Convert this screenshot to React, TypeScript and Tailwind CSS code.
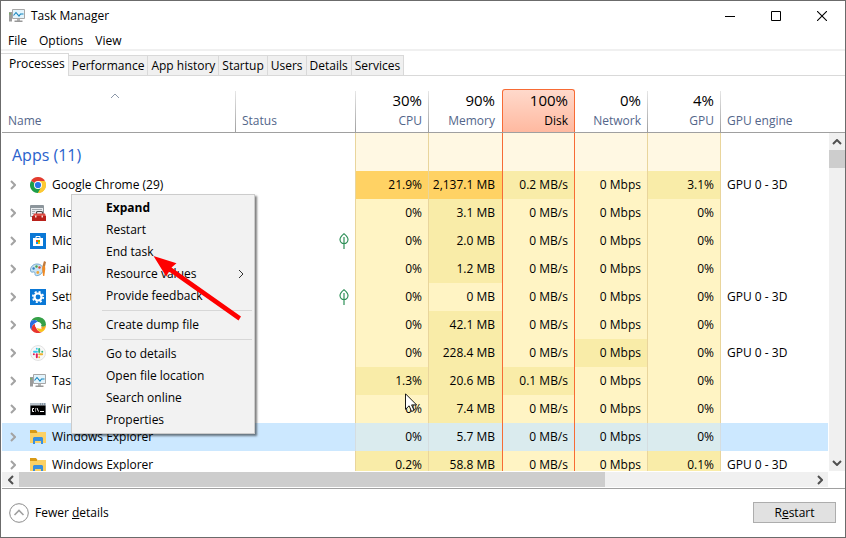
import type { ReactNode } from "react";
import clsx from "clsx";

type Level = "low" | "mid" | "high";
type Cell = [string, Level?];

interface Process {
  name: string;
  icon: ReactNode;
  leaf?: boolean;
  selected?: boolean;
  cells: Cell[];
  engine?: string;
}

const levelColor: Record<Level, string> = {
  low: "bg-[#fff4c4]",
  mid: "bg-[#f9eca8]",
  high: "bg-[#ffd264]",
};

function ChromeIcon() {
  return (
    <svg viewBox="0 0 16 16" className="size-4">
      <path d="M8 8 1.07 4A8 8 0 0 1 14.93 4Z" fill="#e33b2e" />
      <path d="M8 8 1.07 4A8 8 0 0 0 8 16Z" fill="#1e9e4a" />
      <path d="M8 8V16A8 8 0 0 0 14.93 4H8Z" fill="#fcc934" />
      <path d="m4.5 10 3.5 6 3.5-6z" fill="#1e9e4a" />
      <path d="M11.5 10 8 16a8 8 0 0 0 6.93-12H8z" fill="#fcc934" />
      <circle cx="8" cy="8" r="4" fill="#fff" />
      <circle cx="8" cy="8" r="3.1" fill="#2b74e8" />
    </svg>
  );
}

function ToolboxIcon() {
  return (
    <svg viewBox="0 0 16 16" className="size-4">
      <path d="M.5.5h13v11H.5z" fill="#e9edf0" stroke="#8d969c" />
      <path d="M1 1h12v2H1z" fill="#8d969c" />
      <path d="M2 4.500h10M2 6.500h3M2 8.500h2" stroke="#a3abb0" />
      <path d="M6.500 9V7.500q0-1 1-1h4q1 0 1 1V9" fill="none" stroke="#4b4b4b" strokeWidth="1.200" />
      <path d="M4 8.500h11l1 3H2.500z" fill="#dc4b42" />
      <path d="M2 11h14v5H2z" fill="#b9211b" />
      <path d="M5 10.500h1.500v2H5zM11.500 10.500H13v2h-1.500z" fill="#f3dcd8" />
    </svg>
  );
}

function StoreIcon() {
  return (
    <svg viewBox="0 0 16 16" className="size-4">
      <path d="M0 0h16v16H0z" fill="#0a78d6" />
      <path d="M6 5V3.500h4V5" fill="none" stroke="#fff" />
      <path d="M3 5h10v8H3z" fill="#fff" />
      <path d="M6 7h2v2H6z" fill="#f25022" />
      <path d="M8 7h2v2H8z" fill="#7fba00" />
      <path d="M6 9h2v2H6z" fill="#00a4ef" />
      <path d="M8 9h2v2H8z" fill="#ffb900" />
    </svg>
  );
}

function PaintIcon() {
  return (
    <svg viewBox="0 0 16 16" className="size-4">
      <path
        d="M7 3C3 3 .5 6 .5 9c0 2 1 2.500 2.500 2 1.500-.4 2.200.3 2 1.800C4.800 14.500 6 15 8 14.500c3-.8 5-3 5-6C13 5 10.500 3 7 3Z"
        fill="#c9e2f3"
        stroke="#5a9bc7"
        strokeWidth=".8"
      />
      <circle cx="3.600" cy="7.500" r="1.200" fill="#2f7fc2" />
      <circle cx="6.500" cy="5.500" r="1.200" fill="#4fa447" />
      <circle cx="9.500" cy="6.500" r="1.200" fill="#d94a35" />
      <circle cx="7.800" cy="11.500" r="1.400" fill="#f0a63a" />
      <path d="m14 0 2 1-1 4.500-2.500-.5z" fill="#c07a3c" />
      <path d="M12.500 5h2.500l.3 3-1 7h-1.200l-1-7z" fill="#f08a24" />
    </svg>
  );
}

function SettingsIcon() {
  return (
    <svg viewBox="0 0 16 16" className="size-4">
      <path d="M0 0h16v16H0z" fill="#0a78d6" />
      <circle cx="8" cy="8" r="5.200" fill="none" stroke="#fff" strokeWidth="1.800" strokeDasharray="2.042 2.042" />
      <circle cx="8" cy="8" r="3.500" fill="none" stroke="#fff" strokeWidth="2.200" />
    </svg>
  );
}

function ShareIcon() {
  return (
    <svg viewBox="0 0 16 16" className="size-4">
      <path d="M8 0A8 8 0 0 0 1 4c3-2 6-1 7 1l5 3c1-4-1-8-5-8Z" fill="#35a047" />
      <path d="M1 4a8 8 0 0 0 1 9.500C1 9 4 6 8 5 6 2.500 3.500 2.500 1 4Z" fill="#2a6de0" />
      <path d="M2 13.500A8 8 0 0 0 12 15c-4 0-6-3-7-8-3 1-4 4-3 6.500Z" fill="#e8352e" />
      <path d="M12 15a8 8 0 0 0 4-7c-1 3-5 5-9 3 0 2 2 4 5 4Z" fill="#f9c21b" />
      <path d="M16 8a8 8 0 0 0-6-7.700c2 2 3 5 1 8.700 2 1.500 4 1 5-1Z" fill="#35a047" />
      <path d="M16 8c-.3 2-2 4-4 4.500l-1-3c2 .8 4 .3 5-1.500Z" fill="#f5a21d" />
      <circle cx="8" cy="8" r="3" fill="#fff" />
    </svg>
  );
}

function SlackIcon() {
  return (
    <svg viewBox="0 0 16 16" className="size-4">
      <circle cx="8" cy="8" r="7.500" fill="#f8f8f8" stroke="#dcdcdc" strokeWidth=".8" />
      <g fill="none" strokeWidth="1.900" strokeLinecap="round">
        <path d="M4 6.800h3" stroke="#36c5f0" />
        <path d="M6.800 3.700v.1" stroke="#36c5f0" />
        <path d="M9.200 4v3" stroke="#2eb67d" />
        <path d="M12.200 6.800h.1" stroke="#2eb67d" />
        <path d="M9.200 9.200h3" stroke="#ecb22e" />
        <path d="M9.200 12.200v.1" stroke="#ecb22e" />
        <path d="M6.800 9.200v3" stroke="#e01e5a" />
        <path d="M3.800 9.200h.1" stroke="#e01e5a" />
      </g>
    </svg>
  );
}

function TaskManagerIcon() {
  return (
    <svg viewBox="0 0 16 16" className="size-4 shrink-0">
      <path d="M0 4h3v9.500H0z" fill="#9b9b9b" />
      <path d="M.5 5h1v1.500h-1z" fill="#59c135" />
      <path d="M3.500 1.500h12v9h-12z" fill="#e3f4fc" stroke="#a7a7a7" />
      <path d="m4.500 7.500 2.500-3 3 3.500 1.500-2h3" fill="none" stroke="#1383bd" strokeWidth="1.100" />
      <path d="M8 11h3v2H8z" fill="#b5b5b5" />
      <path d="M5.500 12.500h8V14h-8z" fill="#989898" />
    </svg>
  );
}

function ConsoleIcon() {
  return (
    <svg viewBox="0 0 16 16" className="size-4">
      <path d="M0 2h16v12.500H0z" fill="#b9c3cc" />
      <path d="M.5 4.500h15V14H.5z" fill="#000" />
      <path d="M10 3h1m1 0h1m1 0h1" stroke="#51697f" />
      <path d="M4 7.500H2.500v3H4M5.500 7.500v1M5.500 9.500v1M7 7l1.500 3.500M10 10.500h4" fill="none" stroke="#fff" />
    </svg>
  );
}

function FolderIcon() {
  return (
    <svg viewBox="0 0 16 16" className="size-4">
      <path d="M0 1h6l1.500 2v3H0z" fill="#d99a16" />
      <path d="M0 4h7l1-1h8v11H0z" fill="#fcd164" />
      <path d="M3 15V9l1-1h8l1 1v6h-2v-3H5v3Z" fill="#3a8fdd" />
    </svg>
  );
}

function Leaf() {
  return (
    <svg viewBox="0 0 10 16" className="ml-auto h-4 w-[10px]" fill="none" stroke="#2d8f57">
      <path d="M5 .8C3 2.500 1 4 1 6.500 1 9 3 10.500 5 10.500S9 9 9 6.500C9 4 7 2.500 5 .8Z" strokeWidth="1.200" />
      <path d="M5 4v12" strokeWidth="1.200" />
    </svg>
  );
}

function Chevron({ className }: { className?: string }) {
  return (
    <svg viewBox="0 0 6 10" className={clsx("h-[10px] w-[6px]", className)} fill="none" stroke="currentColor">
      <path d="m1 1 4 4-4 4" />
    </svg>
  );
}

const processes: Process[] = [
  {
    name: "Google Chrome (29)",
    icon: <ChromeIcon />,
    cells: [["21.9%", "high"], ["2,137.1 MB", "high"], ["0.2 MB/s", "mid"], ["0 Mbps"], ["3.1%", "mid"]],
    engine: "GPU 0 - 3D",
  },
  {
    name: "Microsoft Management",
    icon: <ToolboxIcon />,
    cells: [["0%"], ["3.1 MB", "mid"], ["0 MB/s"], ["0 Mbps"], ["0%"]],
  },
  {
    name: "Microsoft Store",
    icon: <StoreIcon />,
    leaf: true,
    cells: [["0%"], ["2.0 MB", "mid"], ["0 MB/s"], ["0 Mbps"], ["0%"]],
  },
  {
    name: "Paint",
    icon: <PaintIcon />,
    cells: [["0%"], ["1.2 MB", "mid"], ["0 MB/s"], ["0 Mbps"], ["0%"]],
  },
  {
    name: "Settings",
    icon: <SettingsIcon />,
    leaf: true,
    cells: [["0%"], ["0 MB"], ["0 MB/s"], ["0 Mbps"], ["0%"]],
    engine: "GPU 0 - 3D",
  },
  {
    name: "ShareX",
    icon: <ShareIcon />,
    cells: [["0%"], ["42.1 MB", "mid"], ["0 MB/s"], ["0 Mbps"], ["0%"]],
  },
  {
    name: "Slack",
    icon: <SlackIcon />,
    cells: [["0%"], ["228.4 MB", "mid"], ["0 MB/s"], ["0 Mbps", "mid"], ["0%"]],
    engine: "GPU 0 - 3D",
  },
  {
    name: "Task Manager",
    icon: <TaskManagerIcon />,
    cells: [["1.3%", "mid"], ["20.6 MB", "mid"], ["0.1 MB/s", "mid"], ["0 Mbps"], ["0%"]],
  },
  {
    name: "Windows Command",
    icon: <ConsoleIcon />,
    cells: [["0%"], ["7.4 MB", "mid"], ["0 MB/s"], ["0 Mbps"], ["0%"]],
  },
  {
    name: "Windows Explorer",
    icon: <FolderIcon />,
    selected: true,
    cells: [["0%"], ["5.7 MB"], ["0 MB/s"], ["0 Mbps"], ["0%"]],
  },
  {
    name: "Windows Explorer",
    icon: <FolderIcon />,
    cells: [["0.2%", "mid"], ["58.8 MB", "mid"], ["0 MB/s"], ["0 Mbps"], ["0.1%", "mid"]],
    engine: "GPU 0 - 3D",
  },
];

const columns = [
  { label: "CPU", total: "30%" },
  { label: "Memory", total: "90%" },
  { label: "Disk", total: "100%" },
  { label: "Network", total: "0%" },
  { label: "GPU", total: "4%" },
];

const tabs = ["Processes", "Performance", "App history", "Startup", "Users", "Details", "Services"];

const menuGroups = [
  ["Expand", "Restart", "End task", "Resource values", "Provide feedback"],
  ["Create dump file"],
  ["Go to details", "Open file location", "Search online", "Properties"],
];

// Side borders of the five usage columns; Disk is the hot one.
function sideBorder(i: number, selected?: boolean) {
  if (i === 1) return "pr-[7px]";
  if (i === 2) return "border-x border-[#f76b35] pr-1.5";
  return clsx("border-r pr-1.5", selected ? "border-[#d5dde0]" : "border-[#e9d59c]");
}

const fadeLine =
  "bg-[linear-gradient(#e6e6e6,#a0a0a0)] bg-[length:1px_41px] bg-right-bottom bg-no-repeat";

function TitleBar() {
  return (
    <header className="flex h-[30px] shrink-0 items-center pl-2">
      <TaskManagerIcon />
      <h1 className="ml-1.5 flex-1">Task Manager</h1>
      <button aria-label="Minimize" className="flex h-full w-[46px] items-center justify-center">
        <svg viewBox="0 0 10 10" className="size-[10px]" stroke="#000">
          <path d="M0 5.500h10" />
        </svg>
      </button>
      <button aria-label="Maximize" className="flex h-full w-[46px] items-center justify-center">
        <svg viewBox="0 0 10 10" className="size-[10px]" fill="none" stroke="#000">
          <path d="M.5.5h9v9h-9z" />
        </svg>
      </button>
      <button aria-label="Close" className="flex h-full w-[46px] items-center justify-center">
        <svg viewBox="0 0 10 10" className="size-[10px]" stroke="#000" strokeWidth="1.100">
          <path d="m0 0 10 10M10 0 0 10" />
        </svg>
      </button>
    </header>
  );
}

function Tabs() {
  return (
    <div
      role="tablist"
      className="flex h-[23px] shrink-0 items-end bg-[linear-gradient(#d9d9d9,#d9d9d9)] bg-[length:100%_1px] bg-bottom bg-no-repeat"
    >
      {tabs.map((tab, i) => (
        <button
          key={tab}
          role="tab"
          aria-selected={i === 0}
          className={clsx(
            "border-[#d9d9d9]",
            i === 0
              ? "h-[23px] border-r border-t bg-white pr-[3px] pl-2 pb-0.5"
              : "h-[21px] border-y border-r bg-[#f0f0f0] px-[3px]"
          )}
        >
          {tab}
        </button>
      ))}
    </div>
  );
}

function ProcessTable() {
  return (
    <table className="w-full table-fixed border-separate border-spacing-0">
      <colgroup>
        <col className="w-[234px]" />
        <col className="w-[120px]" />
        {columns.map((c) => (
          <col key={c.label} className="w-[73px]" />
        ))}
        <col />
      </colgroup>
      <thead>
        <tr className="h-[57px] text-[#53668a]">
          <th className={clsx("border-b border-[#a0a0a0] p-0 pb-[3px] pl-1.5 text-left align-bottom font-normal", fadeLine)}>
            <Chevron className="mb-3 ml-[104px] -rotate-90 text-[#8b97a8]" />
            Name
          </th>
          <th className={clsx("border-b border-[#a0a0a0] p-0 pb-[3px] pl-1.5 text-left align-bottom font-normal", fadeLine)}>
            Status
          </th>
          {columns.map((c, i) => (
            <th key={c.label} className="border-b border-[#a0a0a0] p-0 pt-[13px] text-right align-bottom font-normal">
              <div
                className={clsx(
                  "flex h-[43px] flex-col justify-end pb-[3px]",
                  i === 2
                    ? "rounded-t-[3px] border-x border-t border-[#f76b35] bg-linear-to-b from-[#ffd9cb] to-[#ffb9a0] pr-1.5"
                    : "pr-[7px]",
                  i !== 1 && i !== 2 && fadeLine
                )}
              >
                <span className="mb-[3px] text-[15px] leading-5 text-black">{c.total}</span>
                <span className={i === 2 ? "text-black" : undefined}>{c.label}</span>
              </div>
            </th>
          ))}
          <th className="border-b border-[#a0a0a0] p-0 pb-[3px] pl-1.5 text-left align-bottom font-normal">GPU engine</th>
        </tr>
      </thead>
      <tbody>
        <tr className="h-[38px]">
          <td className="p-0 pt-1.5 pl-2.5 text-[16px] text-[#2a62cc]">Apps (11)</td>
          <td className="border-r border-[#e9d59c]" />
          {columns.map((c, i) => (
            <td key={c.label} className={clsx("bg-[#fff8e3]", sideBorder(i))} />
          ))}
          <td />
        </tr>
        {processes.map((p, row) => (
          <tr key={row} className={clsx("h-7", p.selected && "bg-[#cce8ff]")}>
            <td className="p-0">
              <div className="flex items-center pl-2 whitespace-nowrap">
                <Chevron className="mr-3.5 stroke-2 text-[#a3a3a3]" />
                {p.icon}
                <span className="ml-1.5">{p.name}</span>
              </div>
            </td>
            <td className={clsx("border-r p-0 pr-1.5", p.selected ? "border-[#d5dde0]" : "border-[#e9d59c]")}>
              {p.leaf && <Leaf />}
            </td>
            {p.cells.map(([value, level = "low"], i) => (
              <td
                key={i}
                className={clsx(
                  "py-0 pl-0 text-right whitespace-nowrap",
                  sideBorder(i, p.selected),
                  p.selected ? "bg-[#daebee]" : levelColor[level]
                )}
              >
                {value}
              </td>
            ))}
            <td className="py-0 pr-0 pl-1.5 whitespace-nowrap">{p.engine}</td>
          </tr>
        ))}
      </tbody>
    </table>
  );
}

function VerticalScrollbar() {
  return (
    <div className="flex w-[17px] shrink-0 flex-col">
      <div className="h-[57px] shrink-0 border-b border-[#a0a0a0]" />
      <div className="ml-px flex flex-1 flex-col bg-[#f0f0f0]">
        <button aria-label="Scroll up" className="flex h-[17px] items-center justify-center text-[#505050]">
          <Chevron className="-rotate-90 stroke-2" />
        </button>
        <div className="h-[18px] bg-[#cdcdcd]" />
        <button aria-label="Scroll down" className="mt-auto flex h-[17px] items-center justify-center text-[#505050]">
          <Chevron className="rotate-90 stroke-2" />
        </button>
      </div>
    </div>
  );
}

function HorizontalScrollbar() {
  return (
    <div className="mt-px mr-[17px] mb-px flex h-[15px] shrink-0 bg-[#f0f0f0]">
      <button aria-label="Scroll left" className="flex w-[17px] items-center justify-center text-[#505050]">
        <Chevron className="rotate-180 stroke-2" />
      </button>
      <div className="flex-1">
        <div className="h-full w-[74%] bg-[#cdcdcd]" />
      </div>
      <button aria-label="Scroll right" className="flex w-[17px] items-center justify-center text-[#505050]">
        <Chevron className="stroke-2" />
      </button>
    </div>
  );
}

function ContextMenu() {
  return (
    <div
      role="menu"
      className="absolute top-[193px] left-[70px] w-[184px] border border-[#cccccc] bg-[#f2f2f2] p-0.5 shadow-[2px_2px_2px_rgba(0,0,0,0.5)]"
    >
      {menuGroups.map((group, g) => (
        <div key={g}>
          {g > 0 && <hr className="my-[3px] ml-7 border-[#d7d7d7]" />}
          {group.map((item) => (
            <button
              key={item}
              role="menuitem"
              className={clsx(
                "flex h-[22px] w-full items-center justify-between pr-2 pl-8 whitespace-nowrap",
                item === "Expand" && "font-bold"
              )}
            >
              {item}
              {item === "Resource values" && <Chevron className="text-[#333]" />}
            </button>
          ))}
        </div>
      ))}
    </div>
  );
}

function Footer() {
  return (
    <footer className="flex h-[49px] shrink-0 items-center border-t border-[#a0a0a0] pr-[9px] pb-px pl-[7px]">
      <button className="flex items-center">
        <svg viewBox="0 0 20 20" className="size-5" fill="none" stroke="#8b8b8b">
          <circle cx="10" cy="10" r="9.300" />
          <path d="m5.500 12 4.500-4.500 4.500 4.500" stroke="#a0a0a0" strokeWidth="1.600" />
        </svg>
        <span className="ml-1.5">
          Fewer <u>d</u>etails
        </span>
      </button>
      <button className="ml-auto h-[21px] w-[83px] border border-[#adadad] bg-[#e1e1e1]">
        R<u>e</u>start
      </button>
    </footer>
  );
}

export default function App() {
  return (
    <div className="relative flex h-screen flex-col overflow-hidden border border-[#6b6b6b] bg-white font-['Open_Sans','Noto_Sans',sans-serif] text-[12px] leading-4 text-black">
      <TitleBar />
      <nav className="flex h-[18px] shrink-0 items-center gap-3 pt-0.5 pl-[7px]">
        <button>File</button>
        <button>Options</button>
        <button>View</button>
      </nav>
      <div className="mb-0.5 h-0.5 shrink-0 bg-[#f0f0f0]" />
      <Tabs />
      <main className="ml-px flex min-h-0 flex-1 flex-col">
        <div className="flex min-h-0 flex-1 overflow-hidden">
          <div className="min-w-0 flex-1 overflow-hidden">
            <ProcessTable />
          </div>
          <VerticalScrollbar />
        </div>
        <HorizontalScrollbar />
        <Footer />
      </main>
      <ContextMenu />
      <svg viewBox="0 0 90 66" className="pointer-events-none absolute top-[254px] left-[151px] h-[66px] w-[90px]">
        <path d="M1.500 1 24.500 8.300 19.500 12.500 89 61.500 86.500 65.500 17 16.500 14.200 21.500Z" fill="#fe0000" />
      </svg>
      <svg viewBox="0 0 13 20" className="pointer-events-none absolute top-[392px] left-[404px] h-5 w-[13px]">
        <path
          d="M.5.8v15.500l3.600-3.500 2.500 5.700 2.500-1.100-2.500-5.500h5z"
          fill="#fff"
          stroke="#000"
          strokeWidth=".9"
        />
      </svg>
    </div>
  );
}
